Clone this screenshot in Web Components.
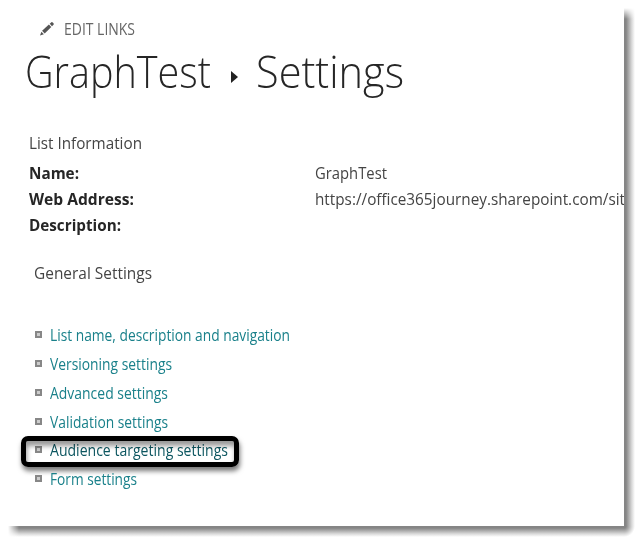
<!DOCTYPE html>
<html lang="en">
<head>
<meta charset="utf-8">
<title>Settings</title>
<style>
html,body{margin:0;height:100%;background:#fff;overflow:hidden}
body{font-family:"Open Sans","Noto Sans",sans-serif;font-size:15.5px;color:#444}
</style>
</head>
<body>
<settings-page></settings-page>
<script>
// One line of text, condensed to the width given in its attribute.
class FitText extends HTMLElement{
  connectedCallback(){
    const r=this.attachShadow({mode:'open'});
    r.innerHTML='<style>:host{display:inline-block;white-space:nowrap;flex:none}span{display:inline-block;transform-origin:0 50%}</style><span><slot></slot></span>';
    const s=r.querySelector('span'),w=+this.getAttribute('w');
    this.style.width=w+'px';
    s.style.transform='scaleX('+w/s.getBoundingClientRect().width+')';
  }
}
class EditLinks extends HTMLElement{
  connectedCallback(){
    this.attachShadow({mode:'open'}).innerHTML=`<style>
    :host{display:flex;align-items:center;height:20px;padding-left:39px;gap:9px;font-size:15.5px;color:#666}
    svg{display:block;width:16px;height:16px;margin-top:-1px}</style>
    <svg viewBox="0 0 16 16" fill="#555"><path d="M1 14.6 2.4 10.7 4.9 13.2Z"/><path d="M3.1 9.8 9.9 3.6 12.3 6 5.7 12.4Z"/><path d="M10.7 2.8 12.1 1.4Q12.7.9 13.4 1.3L14.5 2.3Q15 3 14.5 3.8L13 5.2Z"/></svg>
    <fit-text w="71"><slot></slot></fit-text>`;
  }
}
class PageHeading extends HTMLElement{
  connectedCallback(){
    this.attachShadow({mode:'open'}).innerHTML=`<style>
    :host{display:flex;height:60px;line-height:62px;padding-left:25px;font-size:43.5px;font-weight:300;color:#262626}
    i{width:7px;height:12px;margin:30px 18px 0 20px;background:#222;clip-path:polygon(0 0,100% 50%,0 100%)}</style>
    <fit-text w="186"><slot name="site"></slot></fit-text><i></i><fit-text w="148"><slot></slot></fit-text>`;
  }
}
class InfoRow extends HTMLElement{
  connectedCallback(){
    this.attachShadow({mode:'open'}).innerHTML=`<style>
    :host{display:grid;grid-template-columns:286px 1fr;height:26px;line-height:26px;padding-left:28.5px}
    b{color:#262626;font-weight:700}</style>
    <b><slot name="label"></slot></b><slot></slot>`;
  }
}
class SettingLink extends HTMLElement{
  connectedCallback(){
    this.attachShadow({mode:'open'}).innerHTML=`<style>
    :host{display:flex;align-items:center;position:relative;height:28.75px;line-height:22px;padding-left:35px;gap:7.5px;color:#19808a}
    :host([selected]){color:#0c5660}
    i{box-sizing:border-box;width:7px;height:7px;border:2px solid #878787;background:#ccc;margin-top:-1px}
    u{display:none}
    :host([selected]) u{display:block;position:absolute;left:21px;top:0;width:218px;height:31px;box-sizing:border-box;border:5px solid #000;border-radius:7px;box-shadow:1px 4px 5px #0008,inset 1px 5px 5px #0006}
    </style><i></i><fit-text w="${this.getAttribute('w')}"><slot></slot></fit-text><u></u>`;
  }
}
class SettingsPage extends HTMLElement{
  connectedCallback(){
    this.attachShadow({mode:'open'}).innerHTML=`<style>
    :host{display:grid;grid-template:526px 19px / 624px 19px}
    main{overflow:hidden;background:#fff}
    edit-links{margin-top:19px}
    page-heading{margin-top:2px}
    h2{font:inherit;margin:0;height:26px;line-height:26px;padding-left:28.5px;color:#444}
    .info{margin-top:29px}
    .general{margin-top:22px;padding-left:33.5px}
    info-row:first-of-type{margin-top:4px}
    nav{margin-top:35px}
    .right{margin-top:8px;background:linear-gradient(90deg,#858585 0 2px,#939393 3px,#b0b0b0 5px,#dcdcdc 8px,#fff 11px);-webkit-mask:linear-gradient(transparent,#000 11px)}
    .bottom{margin-left:8px;background:linear-gradient(#858585 0 2px,#939393 3px,#b0b0b0 5px,#dcdcdc 8px,#fff 11px);-webkit-mask:linear-gradient(90deg,transparent,#000 11px)}
    .corner{background:radial-gradient(circle at 0 0,#858585 0 2px,#939393 3px,#b0b0b0 5px,#dcdcdc 8px,#fff 11px)}
    </style>
    <main>
      <edit-links>EDIT LINKS</edit-links>
      <page-heading><span slot="site">GraphTest</span>Settings</page-heading>
      <h2 class="info"><fit-text w="113">List Information</fit-text></h2>
      <info-row><fit-text slot="label" w="50">Name:</fit-text><fit-text w="72">GraphTest</fit-text></info-row>
      <info-row><fit-text slot="label" w="105">Web Address:</fit-text><fit-text w="310">https://office365journey.sharepoint.com/sit</fit-text></info-row>
      <info-row><fit-text slot="label" w="92">Description:</fit-text></info-row>
      <h2 class="general"><fit-text w="118">General Settings</fit-text></h2>
      <nav>
        <setting-link w="240">List name, description and navigation</setting-link>
        <setting-link w="122">Versioning settings</setting-link>
        <setting-link w="118">Advanced settings</setting-link>
        <setting-link w="118">Validation settings</setting-link>
        <setting-link w="178" selected>Audience targeting settings</setting-link>
        <setting-link w="87">Form settings</setting-link>
      </nav>
    </main>
    <div class="right"></div><div class="bottom"></div><div class="corner"></div>`;
  }
}
customElements.define('fit-text',FitText);
customElements.define('edit-links',EditLinks);
customElements.define('page-heading',PageHeading);
customElements.define('info-row',InfoRow);
customElements.define('setting-link',SettingLink);
customElements.define('settings-page',SettingsPage);
</script>
</body>
</html>
